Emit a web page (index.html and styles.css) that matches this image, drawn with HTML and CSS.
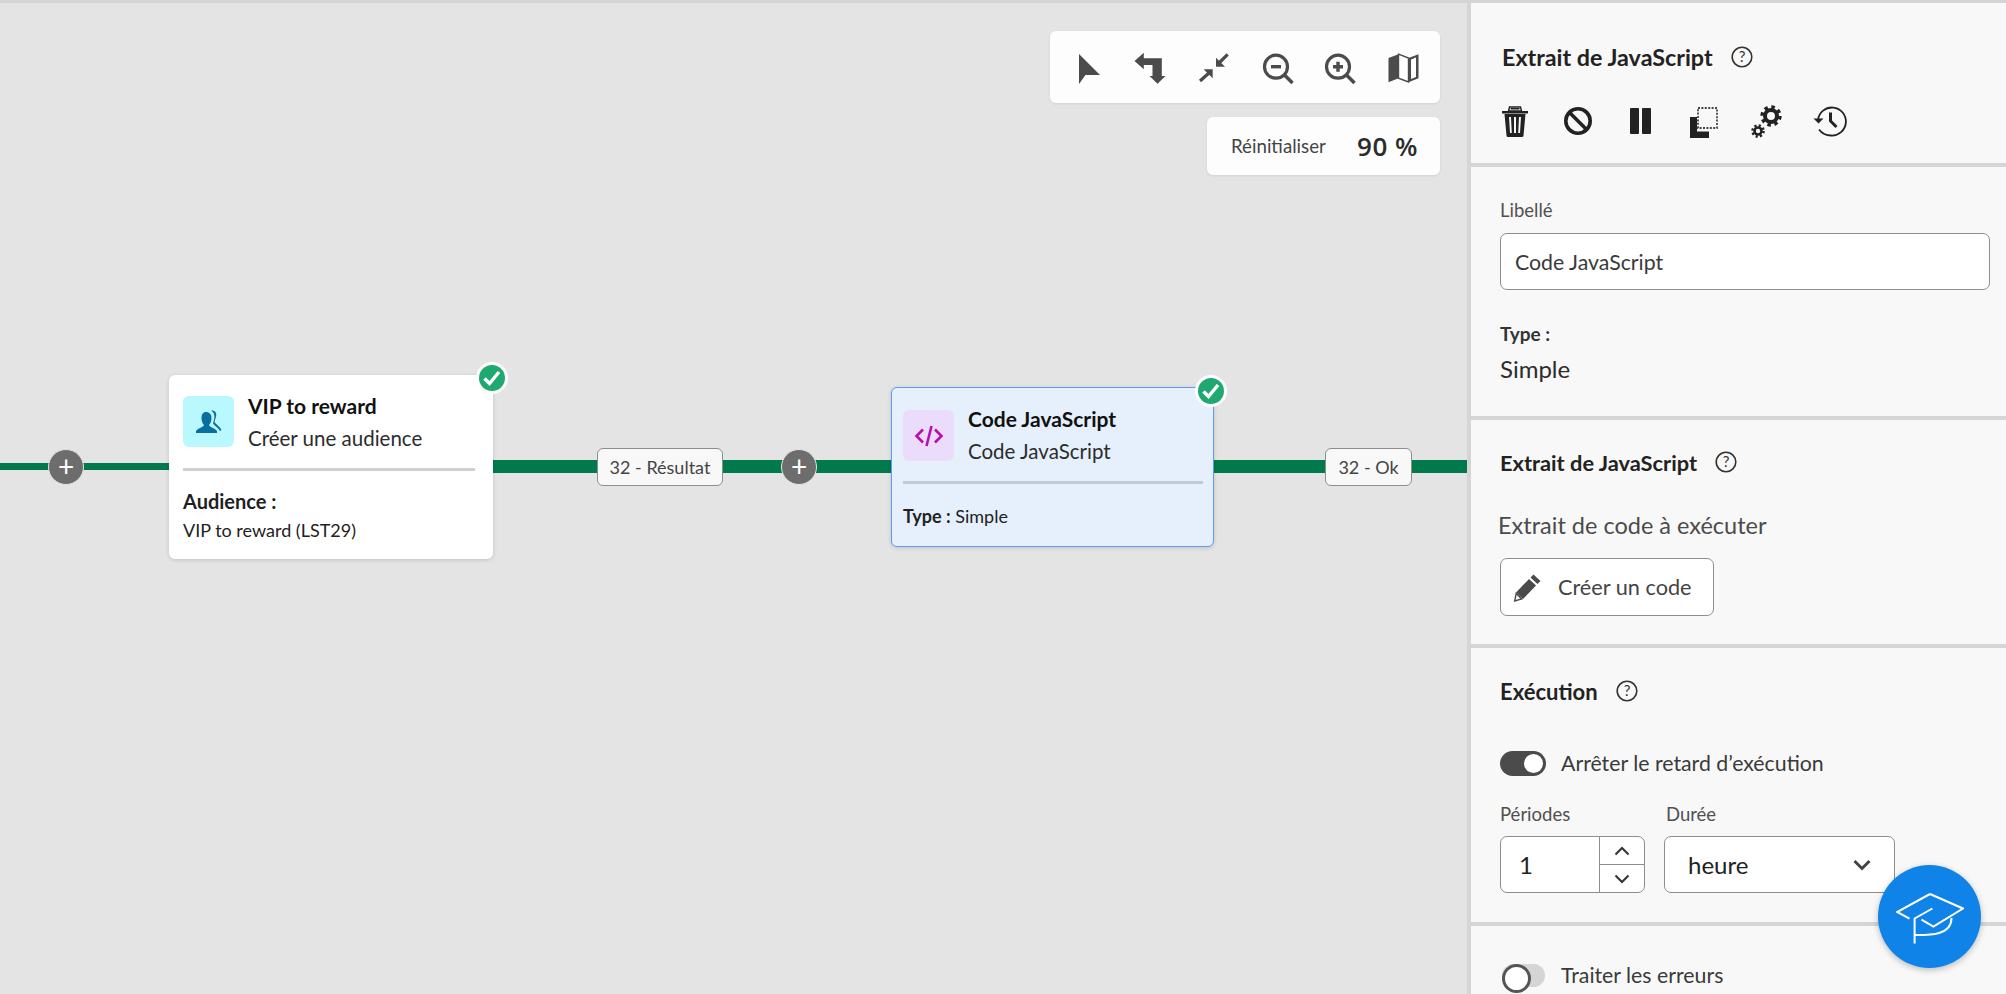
FILE: index.html
```html
<!DOCTYPE html>
<html lang="fr">
<head>
    <meta charset="UTF-8">
    <title>Code JavaScript</title>
    <link rel="stylesheet" href="styles.css">
</head>
<body>
<div class="page">

    <!-- Workflow canvas -->
    <div class="canvas">
        <div class="edge edge-thin"></div>
        <div class="edge edge-one"></div>
        <div class="edge edge-two"></div>

        <div class="plus plus-one">+</div>
        <div class="plus plus-two">+</div>
        <div class="edge-label label-one">32 - Résultat</div>
        <div class="edge-label label-two">32 - Ok</div>

        <div class="node node-audience">
            <div class="node-head">
                <div class="node-icon icon-audience">
                    <svg width="32" height="32" viewBox="0 0 32 32"><path d="M18 5c2-1 4 0 5 2 1 3-1 6-1.500 9 1 2 5 4 7 8l-1.500 1c-2-4-6-5-7-8 1-3 2-6 1-9-.5-1.500-1.500-2.500-2.500-3z" fill="#0a6e9f"/><path d="M13 6c3.500 0 5.500 2.500 5.500 6 0 3-1 5.500-2.500 7 0 2 6 3 8 6v2H3v-2c2-3 8-4 8-6-1.500-1.500-2.500-4-2.500-7 0-3.500 1.500-6 4.500-6z" fill="#0a6e9f"/></svg>
                </div>
                <div class="node-names">
                    <div class="node-title">VIP to reward</div>
                    <div class="node-sub">Créer une audience</div>
                </div>
            </div>
            <div class="node-rule"></div>
            <div class="node-key">Audience :</div>
            <div class="node-value">VIP to reward (LST29)</div>
            <div class="check">
                <svg width="26" height="26" viewBox="0 0 26 26"><circle cx="13" cy="13" r="13" fill="#1fa971"/><path d="M5.500 13.500l5 5 9.500-11.500" fill="none" stroke="#fff" stroke-width="3.400"/></svg>
            </div>
        </div>

        <div class="node node-code">
            <div class="node-head">
                <div class="node-icon icon-code">
                    <svg width="32" height="32" viewBox="0 0 32 32" fill="none" stroke="#b30fb3" stroke-width="2.600"><path d="M10 9.500L3.500 16l6.500 6.500"/><path d="M22 9.500l6.500 6.500-6.500 6.500"/><path d="M18.500 6l-5 20"/></svg>
                </div>
                <div class="node-names">
                    <div class="node-title">Code JavaScript</div>
                    <div class="node-sub">Code JavaScript</div>
                </div>
            </div>
            <div class="node-rule"></div>
            <div class="node-value type-line"><b>Type :</b> Simple</div>
            <div class="check">
                <svg width="26" height="26" viewBox="0 0 26 26"><circle cx="13" cy="13" r="13" fill="#1fa971"/><path d="M5.500 13.500l5 5 9.500-11.500" fill="none" stroke="#fff" stroke-width="3.400"/></svg>
            </div>
        </div>

        <!-- Canvas tools -->
        <div class="toolbar">
            <svg width="36" height="36" viewBox="0 0 36 36"><path d="M8 5l21 21H14.500L8 35z" fill="#4b4b4b"/></svg>
            <svg width="36" height="36" viewBox="0 0 36 36"><path transform="translate(-1.500 0)" d="M2 12l9.300-8.300v5.600h18V27H33l-8 7.700-8-7.700h3V16h-8.700v4.300z" fill="#4b4b4b"/></svg>
            <svg width="36" height="36" viewBox="0 0 36 36" fill="#4b4b4b"><g transform="translate(-2 0)"><path d="M21 17.700V8.700l9 9z"/><path d="M17.700 20.300v9l-9-9z"/><path d="M32.700 5.300L24 14M5 32l9-8" stroke="#4b4b4b" stroke-width="3.200"/></g></svg>
            <svg width="36" height="36" viewBox="0 0 36 36" fill="none" stroke="#4b4b4b"><circle cx="16" cy="17.700" r="11.500" stroke-width="3.200"/><path d="M24.500 26l8 8" stroke-width="3.600"/><path d="M11 17.700h10" stroke-width="3.400"/></svg>
            <svg width="36" height="36" viewBox="0 0 36 36" fill="none" stroke="#4b4b4b"><g transform="translate(-3 0)"><circle cx="18" cy="17.700" r="11.500" stroke-width="3.200"/><path d="M26.500 26l8 8" stroke-width="3.600"/><path d="M13 17.700h10M18 12.700v10" stroke-width="3.400"/></g></svg>
            <svg width="36" height="36" viewBox="0 0 36 36"><path d="M2.500 9l10-3.800v24l-10 4z" fill="#4b4b4b"/><path d="M12.500 5.200l10 3.800v24l-10-3.800z" fill="#fff" stroke="#4b4b4b" stroke-width="1.400"/><path d="M22.500 9l10-3.800v24l-10 4z" fill="#4b4b4b"/><path d="M25 10.500l5-2v19.500l-5 2z" fill="#fff"/></svg>
        </div>
        <div class="zoombox">
            <span class="zoom-reset">Réinitialiser</span>
            <span class="zoom-value">90 %</span>
        </div>
    </div>

    <!-- Properties panel -->
    <div class="panel">
        <section class="section section-top">
            <div class="head">
                <span class="head-text head-big">Extrait de JavaScript</span>
                <svg class="help" width="22" height="22" viewBox="0 0 22 22"><circle cx="11" cy="11" r="9.800" fill="none" stroke="#333" stroke-width="1.600"/><text x="11" y="16" text-anchor="middle" class="help-mark">?</text></svg>
            </div>
            <div class="actions">
                <svg width="36" height="36" viewBox="0 0 36 36" fill="#222"><path d="M5 8h26v2.500H5zM13.500 5h9v1.500h-9z"/><path d="M12.500 4h11l1 4h-13z" fill="none" stroke="#222" stroke-width="1.400"/><path fill-rule="evenodd" d="M7.500 11h21l-2 21.500a1.500 1.500 0 0 1-1.500 1.500H11a1.500 1.500 0 0 1-1.500-1.500zM12 14l1 16h1.800l-.8-16zM17 14v16h2V14zM22 14l-.8 16H23l1-16z"/></svg>
                <svg width="36" height="36" viewBox="0 0 36 36" fill="none" stroke="#222" stroke-width="3.600"><circle cx="18" cy="18" r="12.200"/><path d="M9.500 9.500l17 17"/></svg>
                <svg width="36" height="36" viewBox="0 0 36 36" fill="#222"><rect x="7" y="5" width="9" height="26" rx="1"/><rect x="19" y="5" width="9" height="26" rx="1"/></svg>
                <svg width="36" height="36" viewBox="0 0 36 36"><path d="M4 14h7v14.500h12V35H4z" fill="#222"/><rect x="12" y="5" width="19" height="20" fill="none" stroke="#444" stroke-width="1.800" stroke-dasharray="2 1.400"/></svg>
                <svg width="36" height="36" viewBox="0 0 36 36" fill="none" stroke="#222"><circle cx="22" cy="13" r="6" stroke-width="4"/><circle cx="22" cy="13" r="9" stroke-width="3.400" stroke-dasharray="3.500 3.570"/><circle cx="9" cy="28" r="3.500" stroke-width="2.600"/><circle cx="9" cy="28" r="5.600" stroke-width="2.400" stroke-dasharray="2.200 2.200"/></svg>
                <svg width="36" height="36" viewBox="0 0 36 36" fill="none" stroke="#222" stroke-width="1.800"><path d="M6 17A14 14 0 1 1 19 32.500c-5 0-9-2-12-6"/><path d="M1.500 15.500l5 5 5-5" fill="#222" stroke="none"/><path d="M18.500 9.500V18l6 6" stroke-width="3"/></svg>
            </div>
        </section>

        <section class="section section-label">
            <label class="field-label">Libellé</label>
            <div class="input wide">Code JavaScript</div>
            <div class="type-key">Type :</div>
            <div class="type-value">Simple</div>
        </section>

        <section class="section section-snippet">
            <div class="head">
                <span class="head-text">Extrait de JavaScript</span>
                <svg class="help" width="22" height="22" viewBox="0 0 22 22"><circle cx="11" cy="11" r="9.800" fill="none" stroke="#333" stroke-width="1.600"/><text x="11" y="16" text-anchor="middle" class="help-mark">?</text></svg>
            </div>
            <div class="snippet-text">Extrait de code à exécuter</div>
            <div class="button">
                <svg width="30" height="30" viewBox="0 0 30 30"><path d="M20.500 2.500l7 6.500-3 3-7-6.500z" fill="#4b4b4b"/><path d="M16 7l7 6.500L10 27l-7-6.500z" fill="#4b4b4b"/><path d="M3.200 21.500l5.500 5.500-7 2z" fill="#fff" stroke="#4b4b4b" stroke-width="1.400"/></svg>
                <span>Créer un code</span>
            </div>
        </section>

        <section class="section section-run">
            <div class="head">
                <span class="head-text">Exécution</span>
                <svg class="help" width="22" height="22" viewBox="0 0 22 22"><circle cx="11" cy="11" r="9.800" fill="none" stroke="#333" stroke-width="1.600"/><text x="11" y="16" text-anchor="middle" class="help-mark">?</text></svg>
            </div>
            <div class="switch-row">
                <span class="switch switch-on"></span>
                <span class="switch-text">Arrêter le retard d’exécution</span>
            </div>
            <div class="fields">
                <div>
                    <label class="field-label">Périodes</label>
                    <div class="number">
                        <span class="number-value">1</span>
                        <span class="stepper">
                            <span class="step"><svg width="16" height="10" viewBox="0 0 16 10"><path d="M1.500 8.500L8 2l6.500 6.500" fill="none" stroke="#333" stroke-width="2"/></svg></span>
                            <span class="step"><svg width="16" height="10" viewBox="0 0 16 10"><path d="M1.500 1.500L8 8l6.500-6.500" fill="none" stroke="#333" stroke-width="2"/></svg></span>
                        </span>
                    </div>
                </div>
                <div>
                    <label class="field-label label-duration">Durée</label>
                    <div class="select">
                        <span>heure</span>
                        <svg width="18" height="12" viewBox="0 0 18 12"><path d="M1.500 2L9 9.500 16.500 2" fill="none" stroke="#444" stroke-width="3"/></svg>
                    </div>
                </div>
            </div>
        </section>

        <section class="section section-errors">
            <div class="switch-row">
                <span class="switch switch-off"></span>
                <span class="switch-text">Traiter les erreurs</span>
            </div>
        </section>
    </div>

    <!-- Learn button -->
    <div class="fab">
        <svg width="68" height="56" viewBox="0 0 68 56" fill="none" stroke="#fff" stroke-width="2"><path d="M34 5L67 19.500 37.400 37.500 25.500 30.700"/><path d="M34 5L1 23l12.500 6.700"/><path d="M36.400 19.500L18.600 29.500V54.600"/><path d="M18.600 46C32 46 55.500 47 55.500 29"/></svg>
    </div>
</div>
</body>
</html>
```

FILE: styles.css
```css
* {
    box-sizing: border-box;
}
html, body {
    margin: 0;
    padding: 0;
    height: 100%;
    overflow: hidden;
}
body {
    font-family: "Lato", "Open Sans", sans-serif;
    color: #2c2c2c;
    background-color: #e4e4e4;
}
.page {
    display: flex;
    height: 994px;
    border-top: 3px solid #d5d5d5;
    overflow: hidden;
}

/* Canvas */
.canvas {
    position: relative;
    width: 1467px;
    flex-shrink: 0;
    background-color: #e4e4e4;
}
.edge {
    position: absolute;
    background-color: #007a4d;
}
.edge-thin {
    left: 0;
    top: 460px;
    width: 169px;
    height: 7px;
}
.edge-one {
    left: 493px;
    top: 457px;
    width: 398px;
    height: 13px;
}
.edge-two {
    left: 1214px;
    top: 457px;
    width: 253px;
    height: 13px;
}
.plus {
    position: absolute;
    top: 446px;
    width: 36px;
    height: 36px;
    border-radius: 50%;
    border: 1px solid #e4e4e4;
    background-color: #6d6d6d;
    color: #fff;
    font-size: 28px;
    line-height: 32px;
    text-align: center;
}
.plus-one {
    left: 48px;
}
.plus-two {
    left: 781px;
}
.edge-label {
    position: absolute;
    top: 445px;
    height: 38px;
    display: flex;
    align-items: center;
    justify-content: center;
    background-color: #f8f8f8;
    border: 1px solid #8e8e8e;
    border-radius: 6px;
    font-size: 18px;
    color: #444;
}
.label-one {
    left: 597px;
    width: 126px;
}
.label-two {
    left: 1325px;
    width: 87px;
}

/* Nodes */
.node {
    position: absolute;
    background-color: #fff;
    border-radius: 6px;
    box-shadow: 0 1px 4px rgba(0, 0, 0, 0.15);
}
.node-audience {
    left: 169px;
    top: 372px;
    width: 324px;
    height: 184px;
    padding: 21px 18px 0 14px;
}
.node-code {
    left: 891px;
    top: 384px;
    width: 323px;
    height: 160px;
    padding: 22px 10px 0 11px;
    background-color: #e6f0fd;
    border: 1px solid #5c9df0;
}
.node-head {
    display: flex;
    gap: 14px;
}
.node-icon {
    width: 51px;
    height: 51px;
    border-radius: 6px;
    flex-shrink: 0;
    display: flex;
    align-items: center;
    justify-content: center;
}
.icon-audience {
    background-color: #b9f8fe;
}
.icon-code {
    background-color: #ecdcfb;
}
.node-names {
    margin-top: -7px;
}
.node-code .node-names {
    margin-top: -8px;
}
.node-title {
    font-size: 21px;
    line-height: 33px;
    font-weight: 700;
    color: #111;
}
.node-sub {
    font-size: 20.500px;
    line-height: 32px;
    color: #2c2c2c;
}
.node-rule {
    height: 3px;
    margin-top: 14px;
    background-color: #d0d0d0;
}
.node-code .node-rule {
    background-color: #c0cad6;
}
.node-key {
    margin-top: 18px;
    font-size: 20px;
    line-height: 24px;
    font-weight: 700;
    color: #1f1f1f;
}
.node-value {
    margin-top: 5px;
    font-size: 18px;
    line-height: 24px;
    color: #222;
}
.type-line {
    margin-top: 20px;
}
.check {
    position: absolute;
    top: -13px;
    right: -15px;
    width: 32px;
    height: 32px;
    border-radius: 50%;
    background-color: #fff;
    display: flex;
    align-items: center;
    justify-content: center;
}
.node-code .check {
    top: -13px;
    right: -14px;
}

/* Canvas tools */
.toolbar {
    position: absolute;
    left: 1050px;
    top: 28px;
    width: 390px;
    height: 72px;
    padding: 0 18px 0 21px;
    display: flex;
    align-items: center;
    justify-content: space-between;
    background-color: #fdfdfd;
    border-radius: 6px;
    box-shadow: 0 1px 3px rgba(0, 0, 0, 0.08);
}
.zoombox {
    position: absolute;
    left: 1207px;
    top: 114px;
    width: 233px;
    height: 58px;
    padding: 0 22px 0 24px;
    display: flex;
    align-items: center;
    justify-content: space-between;
    background-color: #fdfdfd;
    border-radius: 6px;
    box-shadow: 0 1px 3px rgba(0, 0, 0, 0.08);
}
.zoom-reset {
    font-size: 18.700px;
    color: #444;
}
.zoom-value {
    font-family: "Open Sans", sans-serif;
    font-size: 26px;
    font-weight: 600;
    letter-spacing: 0.5px;
    color: #2c2c2c;
}

/* Panel */
.panel {
    width: 539px;
    flex-shrink: 0;
    border-left: 4px solid #d5d5d5;
    background-color: #f8f8f8;
}
.section {
    border-bottom: 4px solid #d5d5d5;
    padding: 0 29px;
}
.section-top {
    height: 164px;
    padding-top: 39px;
}
.section-label {
    height: 253px;
    padding-top: 32px;
}
.section-snippet {
    height: 228px;
    padding-top: 27px;
}
.section-run {
    height: 278px;
    padding-top: 28px;
}
.section-errors {
    border-bottom: none;
    padding-top: 36px;
}
.head {
    display: flex;
    align-items: center;
    gap: 18px;
    height: 30px;
}
.head-text {
    font-size: 21.800px;
    font-weight: 700;
    color: #222;
}
.section-run .head-text {
    font-size: 22px;
}
.head-big {
    margin-left: 2px;
    font-size: 23.300px;
}
.help {
    flex-shrink: 0;
}
.help-mark {
    font-size: 15px;
    fill: #333;
    font-family: "Lato", sans-serif;
}
.actions {
    display: flex;
    gap: 27px;
    margin: 31px 0 0 -3px;
}
.field-label {
    display: block;
    font-size: 18.500px;
    line-height: 22px;
    color: #505050;
}
.label-duration {
    margin-left: 2px;
}
.input {
    margin-top: 12px;
    height: 57px;
    padding: 0 14px;
    display: flex;
    align-items: center;
    background-color: #fff;
    border: 1px solid #8e8e8e;
    border-radius: 7px;
    font-size: 21.300px;
    color: #3a3a3a;
}
.wide {
    width: 490px;
}
.type-key {
    margin-top: 32px;
    font-size: 19px;
    line-height: 24px;
    font-weight: 700;
    color: #333;
}
.type-value {
    margin-top: 9px;
    font-size: 24px;
    line-height: 28px;
    color: #2c2c2c;
}
.snippet-text {
    margin: 33px 0 0 -2px;
    font-size: 23.500px;
    line-height: 30px;
    color: #4b4b4b;
}
.button {
    margin-top: 18px;
    width: 214px;
    height: 58px;
    padding-left: 12px;
    display: flex;
    align-items: center;
    gap: 15px;
    background-color: #fff;
    border: 1px solid #8e8e8e;
    border-radius: 7px;
    font-size: 21.700px;
    color: #444;
}
.switch-row {
    display: flex;
    align-items: center;
    gap: 15px;
}
.section-run .switch-row {
    margin-top: 44px;
}
.switch {
    position: relative;
    display: block;
    width: 46px;
    height: 25px;
    border-radius: 13px;
    flex-shrink: 0;
}
.switch::after {
    content: "";
    position: absolute;
    top: 3px;
    width: 19px;
    height: 19px;
    border-radius: 50%;
}
.switch-on {
    background-color: #4b4b4b;
}
.switch-on::after {
    right: 3px;
    background-color: #fff;
}
.switch-off {
    width: 43px;
    height: 23px;
    margin: 0 1px 0 2px;
    background-color: #d5d5d5;
}
.switch-off::after {
    left: 0;
    top: 0;
    width: 23px;
    height: 23px;
    background-color: #fff;
    border: 3px solid #555;
}
.switch-text {
    font-size: 21.300px;
    line-height: 26px;
    color: #3a3a3a;
}
.fields {
    display: flex;
    gap: 19px;
    margin-top: 27px;
}
.number {
    margin-top: 11px;
    width: 145px;
    height: 57px;
    display: flex;
    background-color: #fff;
    border: 1px solid #8e8e8e;
    border-radius: 7px;
    overflow: hidden;
}
.number-value {
    width: 98px;
    padding-left: 18px;
    font-size: 24px;
    line-height: 55px;
    color: #222;
}
.stepper {
    flex: 1;
    display: flex;
    flex-direction: column;
    border-left: 1px solid #8e8e8e;
}
.step {
    flex: 1;
    display: flex;
    align-items: center;
    justify-content: center;
}
.step + .step {
    border-top: 1px solid #8e8e8e;
}
.select {
    margin-top: 11px;
    width: 231px;
    height: 57px;
    padding: 0 23px;
    display: flex;
    align-items: center;
    justify-content: space-between;
    background-color: #fff;
    border: 1px solid #8e8e8e;
    border-radius: 7px;
    font-size: 24px;
    color: #222;
}

/* Learn button */
.fab {
    position: fixed;
    left: 1878px;
    top: 865px;
    width: 103px;
    height: 103px;
    border-radius: 50%;
    background-color: #1083e8;
    box-shadow: 0 2px 6px rgba(0, 0, 0, 0.25);
    display: flex;
    align-items: center;
    justify-content: center;
}
```
